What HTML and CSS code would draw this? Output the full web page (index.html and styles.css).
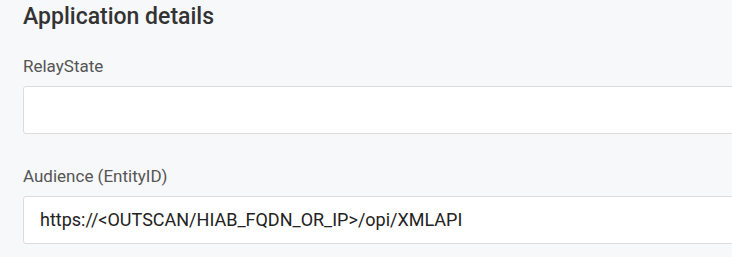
FILE: index.html
```html
<!DOCTYPE html>
<html>
<head>
<meta charset="utf-8">
<link rel="stylesheet" href="styles.css">
</head>
<body>
<div class="page">
  <h2 class="title">Application details</h2>
  <div class="field">
    <label class="label">RelayState</label>
    <div class="input"></div>
  </div>
  <div class="field">
    <label class="label">Audience (EntityID)</label>
    <div class="input">https://&lt;OUTSCAN/HIAB_FQDN_OR_IP&gt;/opi/XMLAPI</div>
  </div>
</div>
</body>
</html>
```
FILE: styles.css
```css
html, body {
  margin: 0;
  padding: 0;
  background: #f7f8fa;
  font-family: Roboto, "Liberation Sans", sans-serif;
  overflow: hidden;
}
.page {
  padding: 3px 0 0 23px;
  width: 760px;
}
.title {
  margin: 0;
  font-size: 23px;
  font-weight: 500;
  line-height: 28px;
  color: #333333;
}
.field {
  display: flex;
  flex-direction: column;
  margin-top: 32px;
}
.title + .field {
  margin-top: 25px;
}
.label {
  font-size: 17px;
  line-height: 20px;
  color: #555555;
  margin-bottom: 10px;
}
.input {
  box-sizing: border-box;
  height: 48px;
  background: #ffffff;
  border: 1px solid #dcdcdc;
  border-radius: 3px;
  padding: 0 16px 2px;
  font-size: 18px;
  color: #222222;
  display: flex;
  align-items: center;
}
```
